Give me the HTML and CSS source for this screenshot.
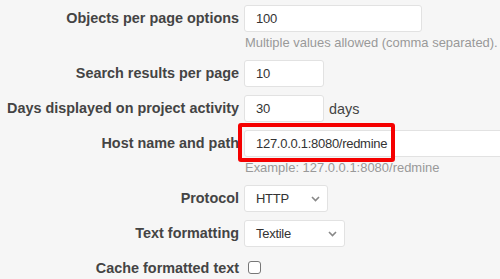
FILE: index.html
```html
<!DOCTYPE html>
<html lang="en">
<head>
  <meta charset="UTF-8">
  <title>Settings - General</title>
  <link rel="stylesheet" href="styles.css">
</head>
<body>
  <div class="settings">
    <div class="row">
      <label class="label">Objects per page options</label>
      <div class="field">
        <input type="text" class="input wide" value="100">
        <em class="info">Multiple values allowed (comma separated).</em>
      </div>
    </div>

    <div class="row">
      <label class="label">Search results per page</label>
      <div class="field">
        <input type="text" class="input short" value="10">
      </div>
    </div>

    <div class="row">
      <label class="label">Days displayed on project activity</label>
      <div class="field inline">
        <input type="text" class="input short" value="30">
        <span class="unit">days</span>
      </div>
    </div>

    <div class="row">
      <label class="label">Host name and path</label>
      <div class="field">
        <div class="marked">
          <input type="text" class="input host" value="127.0.0.1:8080/redmine">
          <span class="highlight"></span>
        </div>
        <em class="info">Example: 127.0.0.1:8080/redmine</em>
      </div>
    </div>

    <div class="row">
      <label class="label">Protocol</label>
      <div class="field">
        <div class="select protocol">
          <span>HTTP</span>
          <svg width="9" height="6" viewBox="0 0 9 6"><path d="M1 1l3.5 3.5L8 1" fill="none" stroke="#888" stroke-width="1.6"/></svg>
        </div>
      </div>
    </div>

    <div class="row">
      <label class="label">Text formatting</label>
      <div class="field">
        <div class="select formatting">
          <span>Textile</span>
          <svg width="9" height="6" viewBox="0 0 9 6"><path d="M1 1l3.5 3.5L8 1" fill="none" stroke="#888" stroke-width="1.6"/></svg>
        </div>
      </div>
    </div>

    <div class="row">
      <label class="label">Cache formatted text</label>
      <div class="field inline">
        <input type="checkbox" class="check">
      </div>
    </div>
  </div>
</body>
</html>
```

FILE: styles.css
```css
* { margin: 0; padding: 0; box-sizing: border-box; }
body {
  font-family: 'Liberation Sans', Arial, sans-serif;
  font-size: 14.4px;
  background: #f6f6f6;
  color: #333;
  overflow: hidden;
}
.settings { padding-top: 5px; }

.row {
  display: flex;
  align-items: flex-start;
  gap: 5px;
  margin-bottom: 8px;
}
.label {
  width: 239px;
  flex-shrink: 0;
  text-align: right;
  font-weight: bold;
  color: #444;
  line-height: 27px;
  white-space: nowrap;
}
.field { display: flex; flex-direction: column; align-items: flex-start; }
.field.inline { flex-direction: row; align-items: center; height: 27px; }

.input {
  height: 27px;
  border: 1px solid #e2e2e2;
  border-radius: 3px;
  background: #fff;
  padding: 0 10px 0 11px;
  font-family: inherit;
  font-size: 13px;
  letter-spacing: -0.28px;
  color: #333;
}
.input.wide { width: 178px; }
.input.short { width: 80px; }
.input.host { width: 300px; }
.unit { margin-left: 5px; color: #444; }

.info {
  font-style: normal;
  font-size: 12.96px;
  color: #999;
  line-height: 19px;
  margin-top: 1px;
  margin-left: 1px;
  white-space: nowrap;
}

/* red annotation around the host field */
.marked { position: relative; }
.highlight {
  position: absolute;
  left: -6px;
  top: -7px;
  width: 157px;
  height: 39px;
  border: 4.5px solid #f50000;
  border-radius: 3px;
}

.select {
  height: 27px;
  display: flex;
  align-items: center;
  justify-content: space-between;
  border: 1px solid #e2e2e2;
  border-radius: 3px;
  background: #fff;
  padding: 0 7px 0 11px;
  font-size: 13px;
  letter-spacing: -0.28px;
  color: #333;
}
.select.protocol { width: 84px; }
.select.formatting { width: 101px; }

.check {
  appearance: none;
  width: 13px;
  height: 13px;
  margin-left: 4px;
  margin-top: -2px;
  border: 1px solid #777;
  border-radius: 3px;
  background: #fff;
}
```
